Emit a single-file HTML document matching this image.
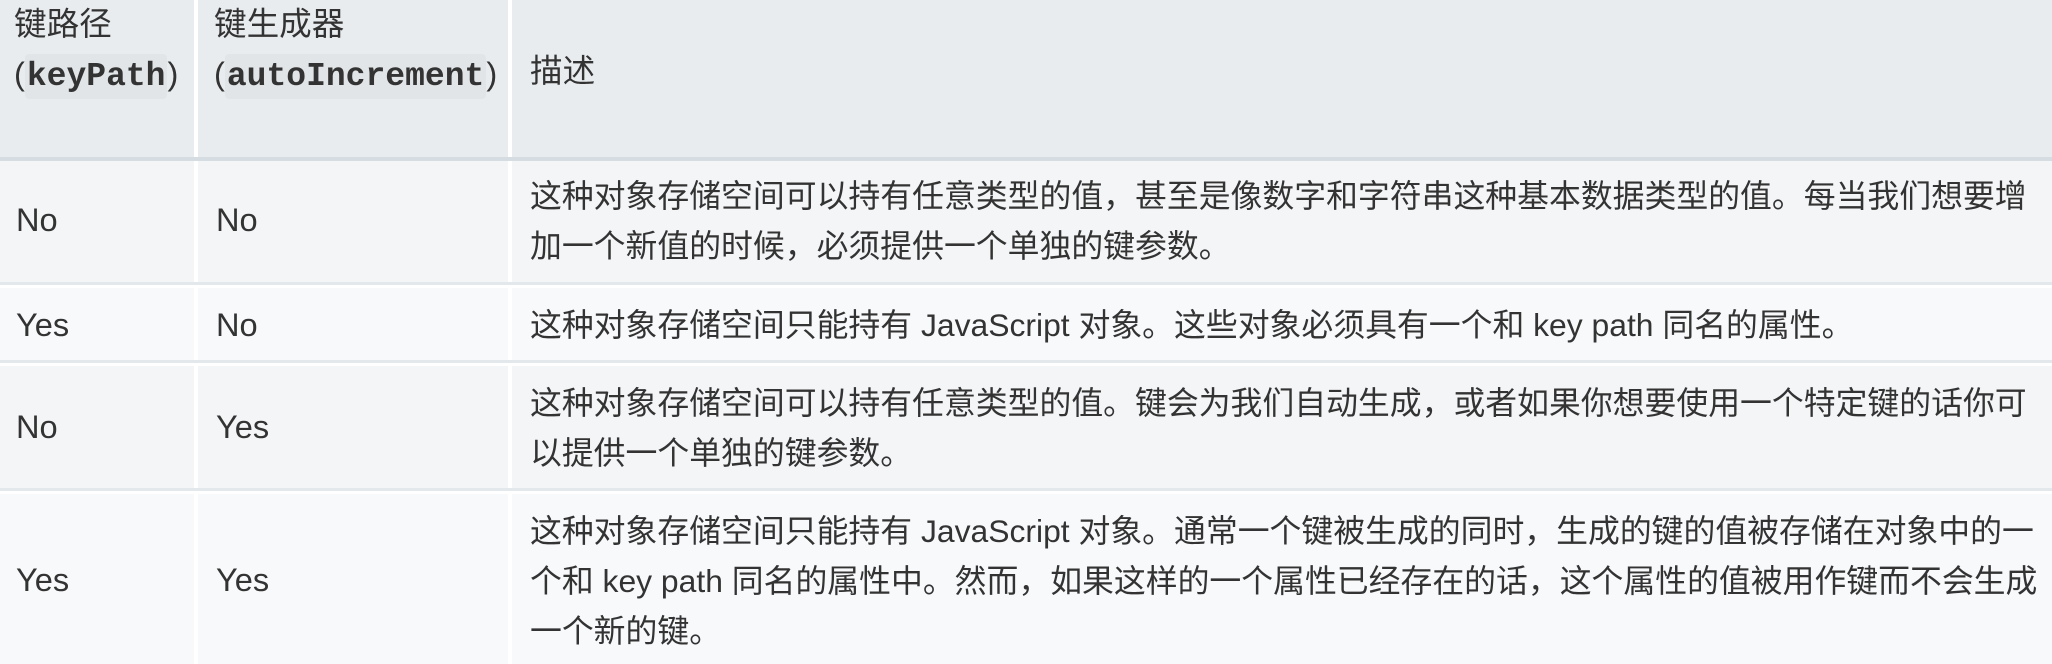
<!DOCTYPE html>
<html><head><meta charset="utf-8"><style>
html,body{margin:0;padding:0;}
body{width:2052px;height:664px;position:relative;overflow:hidden;background:#fff;
font-family:"Liberation Sans","Noto Sans CJK SC",sans-serif;color:#333;font-size:31.85px;}
.r{position:absolute;left:0;width:2052px;}
.c{position:absolute;top:0;bottom:0;}
.t{position:absolute;white-space:nowrap;line-height:50px;}
.h{font-size:32.6px;}
code{font-family:"Liberation Mono",monospace;font-weight:bold;font-size:33px;background:#e1e5e8;border-radius:4px;padding:4px 2px;color:#333;}
</style></head><body>
<div class="r" style="top:0;height:157px;">
 <div class="c" style="left:0;width:194px;background:#e8ecef"></div>
 <div class="c" style="left:198px;width:310px;background:#e8ecef"></div>
 <div class="c" style="left:512px;width:1540px;background:#e8ecef"></div>
</div>
<div class="r" style="top:157px;height:4px;background:#d5dde3"></div>
<div class="r" style="top:161px;height:121px;">
 <div class="c" style="left:0;width:194px;background:#f4f5f7"></div>
 <div class="c" style="left:198px;width:310px;background:#f4f5f7"></div>
 <div class="c" style="left:512px;width:1540px;background:#f4f5f7"></div>
</div>
<div class="r" style="top:282px;height:3px;background:#e3e8ec"></div>
<div class="r" style="top:288px;height:72px;">
 <div class="c" style="left:0;width:194px;background:#f8f9fb"></div>
 <div class="c" style="left:198px;width:310px;background:#f8f9fb"></div>
 <div class="c" style="left:512px;width:1540px;background:#f8f9fb"></div>
</div>
<div class="r" style="top:360px;height:3px;background:#e3e8ec"></div>
<div class="r" style="top:366px;height:122px;">
 <div class="c" style="left:0;width:194px;background:#f4f5f7"></div>
 <div class="c" style="left:198px;width:310px;background:#f4f5f7"></div>
 <div class="c" style="left:512px;width:1540px;background:#f4f5f7"></div>
</div>
<div class="r" style="top:488px;height:3px;background:#e3e8ec"></div>
<div class="r" style="top:494px;height:170px;">
 <div class="c" style="left:0;width:194px;background:#f8f9fb"></div>
 <div class="c" style="left:198px;width:310px;background:#f8f9fb"></div>
 <div class="c" style="left:512px;width:1540px;background:#f8f9fb"></div>
</div>

<div class="t h" style="left:14px;top:-1px;">键路径<br>(<code>keyPath</code>)</div>
<div class="t h" style="left:214px;top:-1px;">键生成器<br>(<code>autoIncrement</code>)</div>
<div class="t h" style="left:530px;top:46px;">描述</div>

<div class="t h" style="left:16px;top:195px;">No</div>
<div class="t h" style="left:216px;top:195px;">No</div>
<div class="t" style="left:530px;top:171px;">这种对象存储空间可以持有任意类型的值，甚至是像数字和字符串这种基本数据类型的值。每当我们想要增<br>加一个新值的时候，必须提供一个单独的键参数。</div>

<div class="t h" style="left:16px;top:300px;">Yes</div>
<div class="t h" style="left:216px;top:300px;">No</div>
<div class="t" style="left:530px;top:300px;">这种对象存储空间只能持有 JavaScript 对象。这些对象必须具有一个和 key path 同名的属性。</div>

<div class="t h" style="left:16px;top:402px;">No</div>
<div class="t h" style="left:216px;top:402px;">Yes</div>
<div class="t" style="left:530px;top:378px;">这种对象存储空间可以持有任意类型的值。键会为我们自动生成，或者如果你想要使用一个特定键的话你可<br>以提供一个单独的键参数。</div>

<div class="t h" style="left:16px;top:555px;">Yes</div>
<div class="t h" style="left:216px;top:555px;">Yes</div>
<div class="t" style="left:530px;top:506px;">这种对象存储空间只能持有 JavaScript 对象。通常一个键被生成的同时，生成的键的值被存储在对象中的一<br>个和 key path 同名的属性中。然而，如果这样的一个属性已经存在的话，这个属性的值被用作键而不会生成<br>一个新的键。</div>
</body></html>
